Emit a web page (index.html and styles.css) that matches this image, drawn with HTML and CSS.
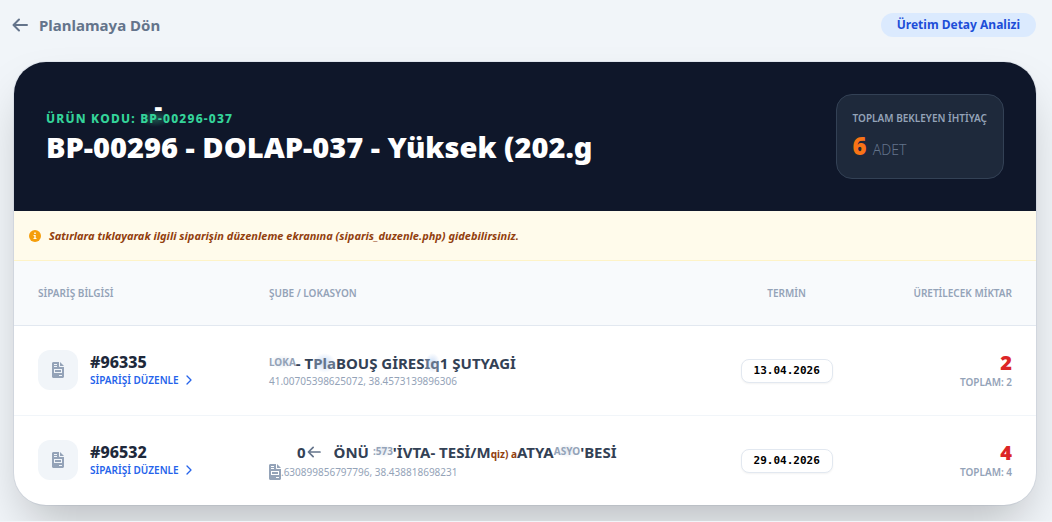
FILE: index.html
```
<!DOCTYPE html>
<html lang="tr">
<head>
  <meta charset="UTF-8" />
  <meta name="viewport" content="width=device-width, initial-scale=1.0"/>
  <title>Üretim Detay Analizi</title>
  <link rel="stylesheet" href="styles.css">
</head>
<body>
  <svg class="tanimlar" width="0" height="0" aria-hidden="true">
    <symbol id="ikon-belge" viewBox="0 0 12 16">
      <path fill="currentColor" fill-rule="evenodd" d="M1.500 0H7v4.200c0 .5.3.8.8.8H12v9.500c0 .8-.7 1.500-1.500 1.500h-9C.7 16 0 15.300 0 14.500v-13C0 .7.7 0 1.500 0zM2 2v1h3V2zm0 2v1h3V4zm0 3v4h8V7zm1 1h6v2H3zm4 5v1h3v-1z"/>
      <path fill="currentColor" d="M8 0l4 4H8z"/>
    </symbol>
    <symbol id="ikon-sag" viewBox="0 0 8 12">
      <path fill="none" stroke="currentColor" stroke-width="1.300" stroke-linecap="round" stroke-linejoin="round" d="M2 2l4 4-4 4"/>
    </symbol>
    <symbol id="ikon-sol" viewBox="0 0 16 14">
      <path fill="none" stroke="currentColor" stroke-width="2" stroke-linecap="round" stroke-linejoin="round" d="M15 7H2M7 1.500L1.500 7 7 12.500"/>
    </symbol>
  </svg>

  <div class="container">
    <header class="ust">
      <a class="geri" href="planlama.php">
        <svg width="16" height="14" aria-hidden="true"><use href="#ikon-sol"/></svg>
        Planlamaya Dön
      </a>
      <span class="etiket">Üretim Detay Analizi</span>
    </header>

    <main class="kart">
      <section class="baslik">
        <div class="urun">
          <p class="kod">ÜRÜN KODU: <span class="leke">BP-0<span class="tire">-</span></span>0296-037</p>
          <h1>BP-00296 - DOLAP-037 - Yüksek (202.g</h1>
        </div>
        <div class="ozet">
          <div class="ozet-ad">TOPLAM BEKLEYEN İHTİYAÇ</div>
          <div class="ozet-deger"><strong>6</strong> <span>ADET</span></div>
        </div>
      </section>

      <p class="bilgi">
        <svg width="12" height="12" viewBox="0 0 12 12" aria-hidden="true">
          <circle cx="6" cy="6" r="6" fill="#f59e0b"/>
          <path fill="#fffbeb" d="M5.200 2.500h1.600V4H5.200zM4.500 5h2.200v3h.8v1h-3V8h.8V6h-.8z"/>
        </svg>
        Satırlara tıklayarak ilgili siparişin düzenleme ekranına (siparis_duzenle.php) gidebilirsiniz.
      </p>

      <table>
        <thead>
          <tr>
            <th class="col-siparis">SİPARİŞ BİLGİSİ</th>
            <th class="col-sube">ŞUBE / LOKASYON</th>
            <th class="col-termin">TERMİN</th>
            <th class="col-miktar">ÜRETİLECEK MİKTAR</th>
          </tr>
        </thead>
        <tbody>
          <tr>
            <td>
              <div class="siparis">
                <span class="kutu"><svg width="12" height="16" aria-hidden="true"><use href="#ikon-belge"/></svg></span>
                <div>
                  <div class="no">#96335</div>
                  <a class="duzenle" href="siparis_duzenle.php?id=96335">SİPARİŞİ DÜZENLE <svg width="8" height="12" aria-hidden="true"><use href="#ikon-sag"/></svg></a>
                </div>
              </div>
            </td>
            <td>
              <div class="sube"><small class="golge">LOKA</small>- T<span class="soluk">Pla</span>BOUŞ GİRES<span class="soluk">Iq</span>1 ŞUTYAGİ</div>
              <div class="konum">41.00705398625072, 38.4573139896306</div>
            </td>
            <td class="col-termin"><span class="tarih">13.04.2026</span></td>
            <td class="col-miktar">
              <div class="adet">2</div>
              <div class="toplam">TOPLAM: 2</div>
            </td>
          </tr>
          <tr>
            <td>
              <div class="siparis">
                <span class="kutu"><svg width="12" height="16" aria-hidden="true"><use href="#ikon-belge"/></svg></span>
                <div>
                  <div class="no">#96532</div>
                  <a class="duzenle" href="siparis_duzenle.php?id=96532">SİPARİŞİ DÜZENLE <svg width="8" height="12" aria-hidden="true"><use href="#ikon-sag"/></svg></a>
                </div>
              </div>
            </td>
            <td>
              <div class="sube ikinci">0<svg class="ok" width="16" height="12" aria-hidden="true"><use href="#ikon-sol"/></svg>ÖNÜ <small class="golge">:573</small>'İVTA- TESİ/M<small class="kahve">qiz) a</small>ATYA<small class="golge">ASYO</small>'BESİ</div>
              <div class="konum"><svg class="belge" width="12" height="16" aria-hidden="true"><use href="#ikon-belge"/></svg>.630899856797796, 38.438818698231</div>
            </td>
            <td class="col-termin"><span class="tarih">29.04.2026</span></td>
            <td class="col-miktar">
              <div class="adet">4</div>
              <div class="toplam">TOPLAM: 4</div>
            </td>
          </tr>
        </tbody>
      </table>
    </main>
  </div>
</body>
</html>
```
FILE: styles.css
```
* {
  box-sizing: border-box;
}

body {
  font-family: 'Noto Sans', 'Open Sans', sans-serif;
  background: #f1f5f9;
  color: #1e293b;
  margin: 0;
}

p, h1 {
  margin: 0;
}

a {
  text-decoration: none;
}

.tanimlar {
  position: absolute;
}

.container {
  padding: 13px 16px 16px 14px;
}

.ust {
  display: flex;
  align-items: center;
  justify-content: space-between;
  height: 24px;
  margin: 0 0 25px -2px;
}

.geri {
  display: flex;
  align-items: center;
  gap: 11px;
  color: #64748b;
  font-size: 15px;
  font-weight: 700;
}

.etiket {
  padding: 0 16px;
  border-radius: 12px;
  background: #dbeafe;
  color: #1d4ed8;
  font-size: 12px;
  font-weight: 700;
  line-height: 24px;
}

.kart {
  background: white;
  border-radius: 32px;
  overflow: hidden;
  box-shadow: 0 25px 50px -12px rgba(0, 0, 0, 0.25), 0 0 0 1px #e2e8f0;
}

.baslik {
  display: flex;
  align-items: center;
  justify-content: space-between;
  padding: 32px;
  background: #0f172a;
  color: white;
}

.kod {
  margin-top: 4px;
  color: #34d399;
  font-size: 12px;
  font-weight: 800;
  letter-spacing: 0.1em;
  line-height: 16px;
}

.leke {
  position: relative;
  background: radial-gradient(ellipse at center, #1e5950, transparent 70%);
}

/* floats above the product code */
.tire {
  position: absolute;
  right: 8px;
  bottom: 12px;
  color: white;
  font-size: 24px;
  font-weight: 900;
  line-height: 16px;
}

h1 {
  font-size: 29px;
  font-weight: 900;
  line-height: 40px;
}

.ozet {
  padding: 16px;
  border: 1px solid #334155;
  border-radius: 16px;
  background: #1e293b;
}

.ozet-ad {
  color: #94a3b8;
  font-size: 10px;
  font-weight: 600;
  line-height: 15px;
}

.ozet-deger {
  display: flex;
  align-items: baseline;
  gap: 6px;
  height: 32px;
  margin-top: 4px;
  line-height: 32px;
}

.ozet-deger strong {
  color: #f97316;
  font-size: 24px;
  font-weight: 900;
}

.ozet-deger span {
  color: #64748b;
  font-size: 14px;
  font-weight: 300;
}

.bilgi {
  display: flex;
  align-items: center;
  gap: 8px;
  padding: 16px 15px;
  border-bottom: 1px solid #fef3c7;
  background: #fffbeb;
  color: #92400e;
  font-size: 11px;
  font-style: italic;
  font-weight: 700;
  line-height: 17px;
}

table {
  width: 100%;
  border-collapse: collapse;
  table-layout: fixed;
}

th {
  height: 64px;
  padding: 0 24px;
  border-bottom: 1px solid #e2e8f0;
  background: #f8fafc;
  color: #94a3b8;
  font-size: 10px;
  font-weight: 600;
  text-align: left;
}

td {
  height: 90px;
  padding: 0 24px;
}

tbody tr + tr td {
  border-top: 1px solid #f1f5f9;
}

.col-siparis {
  width: 22.6%;
}

.col-termin {
  width: 14%;
  text-align: center;
}

.col-miktar {
  width: 17.4%;
  text-align: right;
}

.siparis {
  display: flex;
  align-items: center;
  gap: 12px;
}

.kutu {
  display: flex;
  align-items: center;
  justify-content: center;
  width: 40px;
  height: 40px;
  border-radius: 12px;
  background: #f1f5f9;
  color: #94a3b8;
}

.no {
  font-size: 16px;
  font-weight: 800;
  line-height: 20px;
}

.duzenle {
  display: flex;
  align-items: center;
  gap: 6px;
  color: #2563eb;
  font-size: 10px;
  font-weight: 600;
  line-height: 16px;
}

.sube {
  color: #334155;
  font-size: 15px;
  font-weight: 700;
  line-height: 20px;
  white-space: nowrap;
}

.sube small {
  color: #94a3b8;
  font-size: 10px;
  vertical-align: 3px;
}

.sube .kahve {
  color: #92400e;
  vertical-align: 0;
}

.ikinci {
  padding-left: 28px;
}

.golge {
  background: radial-gradient(ellipse at center, #e2e8f0, transparent 70%);
}

.soluk {
  color: #64748b;
  background: radial-gradient(ellipse at center, #cbdcf5, transparent 70%);
}

.ok {
  margin-right: 12px;
  color: #64748b;
}

.konum {
  color: #94a3b8;
  font-size: 10px;
  line-height: 16px;
}

.belge {
  vertical-align: bottom;
}

.tarih {
  display: inline-block;
  padding: 0 12px;
  border: 1px solid #e2e8f0;
  border-radius: 8px;
  background: white;
  box-shadow: 0 1px 2px rgba(0, 0, 0, 0.05);
  color: black;
  font-family: 'DejaVu Sans Mono', monospace;
  font-size: 11px;
  font-weight: 700;
  line-height: 22px;
}

.adet {
  color: #dc2626;
  font-size: 20px;
  font-weight: 900;
  line-height: 24px;
}

.toplam {
  color: #94a3b8;
  font-size: 10px;
  font-weight: 600;
  line-height: 14px;
}
```
